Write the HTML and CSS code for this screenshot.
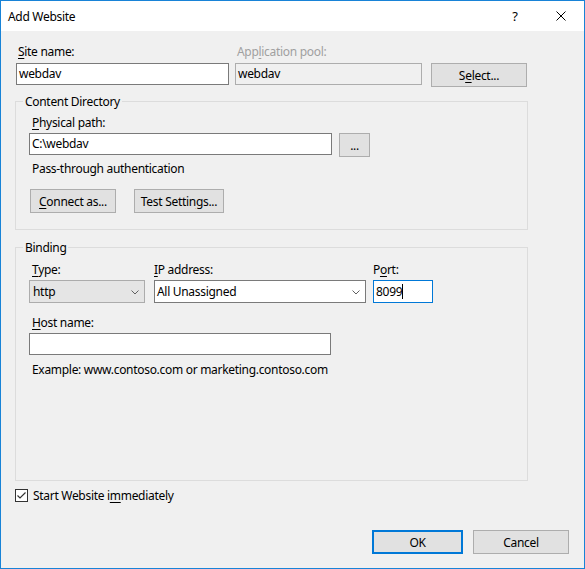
FILE: index.html
```html
<!DOCTYPE html>
<html>
<head>
    <meta charset="UTF-8">
    <title>Add Website</title>
    <link rel="stylesheet" href="styles.css">
</head>
<body>
<div class="window">
    <div class="titlebar">
        <span class="title">Add Website</span>
        <span class="cap-btn">?</span>
        <span class="cap-btn">
            <svg width="10" height="10" viewBox="0 0 10 10"><path d="M0.5 0.5L9.5 9.5M9.5 0.5L0.5 9.5" stroke="#000" stroke-width="1" fill="none"/></svg>
        </span>
    </div>

    <div class="dlg">
        <div class="site-row">
            <label class="lbl"><u>S</u>ite name:</label>
            <label class="lbl off">App<u>l</u>ication pool:</label>
            <span></span>
            <div class="field">webdav</div>
            <div class="field ro">webdav</div>
            <div class="btn select">S<u>e</u>lect...</div>
        </div>

        <fieldset class="group dir">
            <legend>Content Directory</legend>
            <label class="lbl"><u>P</u>hysical path:</label>
            <div class="path-row">
                <div class="field path">C:\webdav</div>
                <div class="btn dots">...</div>
            </div>
            <div class="note">Pass-through authentication</div>
            <div class="btn-row">
                <div class="btn connect"><u>C</u>onnect as...</div>
                <div class="btn test">Test Settin<u>g</u>s...</div>
            </div>
        </fieldset>

        <fieldset class="group binding">
            <legend>Binding</legend>
            <div class="bind-row">
                <label class="lbl"><u>T</u>ype:</label>
                <label class="lbl"><u>I</u>P address:</label>
                <label class="lbl">P<u>o</u>rt:</label>
                <div class="combo gray">http
                    <svg width="8" height="5" viewBox="0 0 8 5"><path d="M0.5 0.5L4 4L7.5 0.5" stroke="#606060" fill="none"/></svg>
                </div>
                <div class="combo">All Unassigned
                    <svg width="8" height="5" viewBox="0 0 8 5"><path d="M0.5 0.5L4 4L7.5 0.5" stroke="#606060" fill="none"/></svg>
                </div>
                <div class="field port">8099<span class="caret"></span></div>
            </div>
            <label class="lbl host-lbl"><u>H</u>ost name:</label>
            <div class="field host"></div>
            <div class="note example">Example: www.contoso.com or marketing.contoso.com</div>
        </fieldset>

        <div class="check-row">
            <span class="check">
                <svg width="11" height="11" viewBox="0 0 11 11"><path d="M1.5 5.5L4 8L9.5 2.5" stroke="#333" stroke-width="1.2" fill="none"/></svg>
            </span>
            <span>Start Website i<u>m</u>mediately</span>
        </div>

        <div class="foot">
            <div class="btn ok">OK</div>
            <div class="btn cancel">Cancel</div>
        </div>
    </div>
</div>
</body>
</html>
```

FILE: styles.css
```css
* {
    margin: 0;
    padding: 0;
    box-sizing: border-box;
}

body {
    font-family: "Noto Sans", "Open Sans", sans-serif;
    font-size: 12px;
    line-height: 15px;
    letter-spacing: -0.3px;
    color: #000;
}

.window {
    width: 585px;
    height: 569px;
    border: 1px solid #1883d7;
    background: #f0f0f0;
    display: flex;
    flex-direction: column;
}

.titlebar {
    height: 30px;
    background: #fff;
    display: flex;
    align-items: center;
    padding-left: 7px;
}

.title {
    flex: 1;
}

.cap-btn {
    width: 46px;
    height: 30px;
    display: flex;
    align-items: center;
    justify-content: center;
    font-size: 13px;
}

.dlg {
    padding: 13px 0 0 14px;
}

u {
    text-decoration: underline;
    text-underline-offset: 2px;
}

.lbl {
    display: block;
    height: 15px;
    padding-left: 2px;
    white-space: nowrap;
}

.lbl.off {
    color: #a0a0a0;
}

.field {
    height: 22px;
    border: 1px solid #7a7a7a;
    background: #fff;
    padding: 0 2px;
    line-height: 20px;
    white-space: nowrap;
}

.field.ro {
    background: #f0f0f0;
    border-color: #adadad;
}

.btn {
    height: 24px;
    border: 1px solid #adadad;
    background: #e1e1e1;
    display: flex;
    align-items: center;
    justify-content: center;
    white-space: nowrap;
}

/* first row */
.site-row {
    display: grid;
    grid-template-columns: 213px 187px 97px;
    column-gap: 6px;
    row-gap: 4px;
    margin-left: 1px;
}

.select {
    margin-left: 3px;
    width: 96px;
}

/* group boxes */
.group {
    width: 513px;
    border: 1px solid #dcdcdc;
    padding: 6px 12px 16px 13px;
}

.group legend {
    padding: 0 2px;
    margin-left: -6px;
    line-height: 15px;
}

.group .lbl {
    padding-left: 3px;
}

.dir {
    margin-top: 7px;
}

.dir .lbl {
    margin-bottom: 3px;
}

.path-row {
    display: flex;
    align-items: flex-start;
}

.path {
    width: 303px;
}

.dots {
    width: 31px;
    margin-left: 7px;
}

.note {
    margin-top: 4px;
    padding-left: 3px;
}

.btn-row {
    display: flex;
    margin-top: 13px;
    margin-left: 1px;
}

.connect {
    width: 86px;
}

.test {
    width: 90px;
    margin-left: 18px;
}

.binding {
    margin-top: 10px;
    padding-top: 7px;
    padding-bottom: 103px;
}

.bind-row {
    display: grid;
    grid-template-columns: 116px 212px 58px;
    column-gap: 9px;
    row-gap: 3px;
}

.bind-row .lbl:nth-child(2),
.bind-row .lbl:nth-child(3) {
    padding-left: 0;
}

.bind-row .lbl:nth-child(3),
.bind-row .port {
    margin-left: -2px;
}

.combo {
    height: 23px;
    border: 1px solid #7a7a7a;
    background: #fff;
    display: flex;
    align-items: center;
    justify-content: space-between;
    padding: 0 5px 0 2px;
}

.combo.gray {
    background: #e5e5e5;
    border-color: #acacac;
    padding-left: 3px;
}

.combo svg {
    margin-top: 1px;
}

.port {
    height: 23px;
    border-color: #0078d7;
    line-height: 21px;
    display: flex;
    align-items: center;
}

.caret {
    display: inline-block;
    width: 1px;
    height: 15px;
    background: #000;
}

.host-lbl {
    margin-top: 12px;
    margin-bottom: 3px;
}

.host {
    width: 302px;
}

.example {
    margin-top: 7px;
}

/* checkbox */
.check-row {
    display: flex;
    align-items: center;
    gap: 5px;
    margin-top: 7px;
    height: 15px;
}

.check {
    width: 13px;
    height: 13px;
    border: 1px solid #333;
    background: #fff;
    display: flex;
    align-items: center;
    justify-content: center;
}

/* dialog buttons */
.foot {
    display: flex;
    justify-content: flex-end;
    gap: 10px;
    margin-top: 27px;
    margin-right: 15px;
}

.ok {
    width: 91px;
    border: 2px solid #0078d7;
}

.cancel {
    width: 96px;
}
```
